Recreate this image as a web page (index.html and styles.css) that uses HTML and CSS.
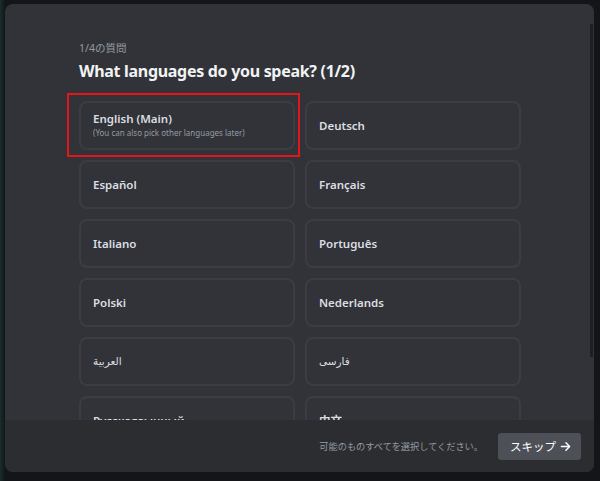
FILE: index.html
```html
<!DOCTYPE html>
<html lang="ja">
  <head>
    <meta charset="UTF-8" />
    <meta name="viewport" content="width=device-width, initial-scale=1.0" />
    <title>Onboarding</title>
    <link rel="stylesheet" href="styles.css">
  </head>
  <body>
    <div class="backdrop">
      <div class="modal">
        <div class="content">
          <div class="step">1/4の質問</div>
          <h1 class="title">What languages do you speak? (1/2)</h1>
          <div class="options">
            <div class="option main">
              <div class="name">English (Main)</div>
              <div class="hint">(You can also pick other languages later)</div>
              <span class="highlight"></span>
            </div>
            <div class="option"><div class="name">Deutsch</div></div>
            <div class="option"><div class="name">Español</div></div>
            <div class="option"><div class="name">Français</div></div>
            <div class="option"><div class="name">Italiano</div></div>
            <div class="option"><div class="name">Português</div></div>
            <div class="option"><div class="name">Polski</div></div>
            <div class="option"><div class="name">Nederlands</div></div>
            <div class="option"><div class="name rtl" dir="rtl">العربية</div></div>
            <div class="option"><div class="name rtl" dir="rtl">فارسی</div></div>
            <div class="option"><div class="name">Русскоязычный</div></div>
            <div class="option"><div class="name">中文</div></div>
          </div>
        </div>
        <div class="scrollbar"></div>
        <div class="footer">
          <span class="footer-text">可能のものすべてを選択してください。</span>
          <button class="skip">スキップ
            <svg width="11" height="11" viewBox="0 0 12 12" fill="none" stroke="currentColor" stroke-width="1.6" stroke-linecap="round" stroke-linejoin="round">
              <path d="M1.5 6h9M6.5 2l4 4-4 4"/>
            </svg>
          </button>
        </div>
      </div>
    </div>
  </body>
</html>
```

FILE: styles.css
```css
body {
  margin: 0;
  padding: 0;
  background: #141518;
  font-family: "Noto Sans", "DejaVu Sans", "Noto Sans CJK JP", sans-serif;
  color: #dbdee1;
}
.backdrop {
  height: 481px;
  padding: 4px 6px 9px 5px;
  box-sizing: border-box;
  background: linear-gradient(90deg, #16302c 0, #141518 5px);
}
.modal {
  position: relative;
  height: 100%;
  background: #313338;
  border-radius: 8px;
  display: flex;
  flex-direction: column;
  overflow: hidden;
}
.content {
  flex: 1;
  overflow: hidden;
  padding: 37px 0 0 74px;
}
.step {
  font-size: 10.5px;
  line-height: 14px;
  color: #949ba4;
}
.title {
  margin: 5px 0 0;
  font-size: 16px;
  line-height: 22px;
  font-weight: 700;
  letter-spacing: -0.3px;
  color: #f2f3f5;
}
.options {
  display: grid;
  grid-template-columns: 216px 216px;
  grid-auto-rows: 49px;
  gap: 10px;
  margin-top: 19px;
}
.option {
  position: relative;
  border: 2px solid #3b3d43;
  border-radius: 8px;
  padding: 0 12px;
  display: flex;
  flex-direction: column;
  justify-content: center;
  box-sizing: border-box;
}
.option .name {
  font-size: 11.5px;
  font-weight: 600;
  line-height: 15px;
  text-align: left;
}
.option .name.rtl {
  font-family: "DejaVu Sans", sans-serif;
  font-size: 10.5px;
  font-weight: 400;
}
.main .name {
  margin-top: -2px;
}
.option .hint {
  font-size: 8px;
  line-height: 12px;
  color: #949ba4;
  margin-top: 1px;
}
.highlight {
  position: absolute;
  left: -14px;
  right: -7px;
  top: -10px;
  bottom: -9px;
  border: 2px solid #e3161b;
}
.scrollbar {
  position: absolute;
  right: 1px;
  top: 20px;
  width: 3px;
  height: 333px;
  background: #1e1f22;
}
.footer {
  height: 52px;
  flex-shrink: 0;
  background: #2b2d31;
  display: flex;
  align-items: center;
  justify-content: flex-end;
  padding-right: 13px;
  gap: 15px;
}
.footer-text {
  font-size: 9.2px;
  color: #949ba4;
}
.skip {
  height: 27px;
  padding: 0 10px 0 12px;
  border: none;
  border-radius: 3px;
  background: #4e5058;
  color: #ffffff;
  font-family: inherit;
  font-size: 11.5px;
  display: flex;
  align-items: center;
  gap: 4px;
}
```
